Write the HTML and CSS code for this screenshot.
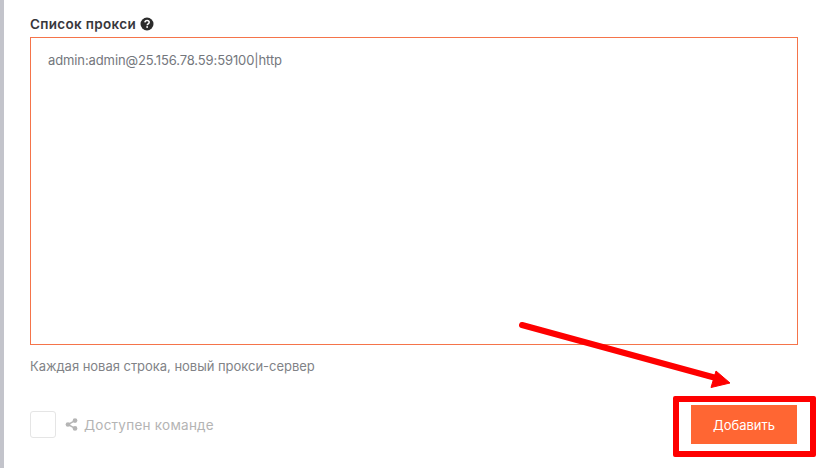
FILE: index.html
```html
<!DOCTYPE html>
<html lang="ru">
<head>
<meta charset="utf-8">
<title>Список прокси</title>
<link rel="stylesheet" href="styles.css">
</head>
<body>
<main class="panel">
  <div class="label-row">
    <span class="label">Список прокси</span>
    <svg class="help" viewBox="0 0 14 14" aria-hidden="true"><circle cx="7" cy="7" r="6.5" fill="#2b2b2b"/><path d="M4.9 5.4C5 4.2 5.9 3.5 7.1 3.5c1.2 0 2.1.8 2.1 1.8 0 1.7-2 1.6-2 3" fill="none" stroke="#fff" stroke-width="1.5"/><rect x="6.3" y="9.2" width="1.7" height="1.6" fill="#fff"/></svg>
  </div>
  <div class="textarea">admin:admin@25.156.78.59:59100|http</div>
  <p class="hint">Каждая новая строка, новый прокси-сервер</p>
  <div class="footer">
    <div class="team">
      <span class="checkbox"></span>
      <svg class="share" viewBox="0 0 14 14" aria-hidden="true"><path d="M10.8 2.8 3.2 7l7.6 4.2" fill="none" stroke="#b5b5b5" stroke-width="1.6"/><circle cx="10.8" cy="2.8" r="2.5" fill="#b5b5b5"/><circle cx="3.2" cy="7" r="2.5" fill="#b5b5b5"/><circle cx="10.8" cy="11.2" r="2.5" fill="#b5b5b5"/></svg>
      <span class="team-label">Доступен команде</span>
    </div>
    <button class="add" type="button">Добавить</button>
  </div>
</main>
<svg class="arrow" viewBox="0 0 822 468" aria-hidden="true"><path d="M522 325 716 378" fill="none" stroke="#fe0000" stroke-width="6" stroke-linecap="round"/><path d="M716 371 730 383 711 387.5Z" fill="#fe0000" stroke="#fe0000" stroke-width="1"/></svg>
<div class="highlight"></div>
</body>
</html>
```

FILE: styles.css
```css
* { box-sizing: border-box; }
html, body { margin: 0; height: 468px; overflow: hidden; background: #fff; }
body { position: relative; font-family: "Inter", "Noto Sans", sans-serif; }
.panel {
  height: 468px;
  border-left: 4px solid #c3c4cb;
  padding: 15px 24px 0 26px;
  display: flex;
  flex-direction: column;
}
.label-row { display: flex; align-items: center; gap: 4px; height: 17px; margin-bottom: 5px; }
.label { font-size: 13.5px; font-weight: 600; color: #37373c; letter-spacing: .32px; }
.help { width: 14px; height: 14px; }
.textarea {
  height: 308px;
  border: 1px solid #f5744a;
  padding: 14px 17px;
  font-size: 13px;
  line-height: 16px;
  color: #74777d;
  letter-spacing: -.11px;
}
.hint { margin: 13px 0 0; font-size: 13px; line-height: 16px; color: #818387; letter-spacing: -.03px; }
.footer { display: flex; justify-content: space-between; align-items: center; margin-top: 31px; }
.team { display: flex; align-items: center; }
.checkbox { width: 26px; height: 27px; border: 1px solid #e5e5e5; border-radius: 3px; background: #fff; }
.share { width: 13px; height: 13px; margin-left: 9px; }
.team-label { margin-left: 6px; font-size: 13.5px; color: #b4b4b4; letter-spacing: .25px; }
.add {
  width: 106px;
  height: 39px;
  margin-right: 1px;
  border: 0;
  background: #ff6633;
  color: #fff;
  font: 400 13px "Inter", "Noto Sans", sans-serif;
}
.arrow { position: absolute; left: 0; top: 0; width: 822px; height: 468px; pointer-events: none; }
.highlight {
  position: absolute;
  left: 673px;
  top: 396px;
  width: 143px;
  height: 61px;
  border: 6px solid #fe0000;
  border-radius: 2px;
}
```
